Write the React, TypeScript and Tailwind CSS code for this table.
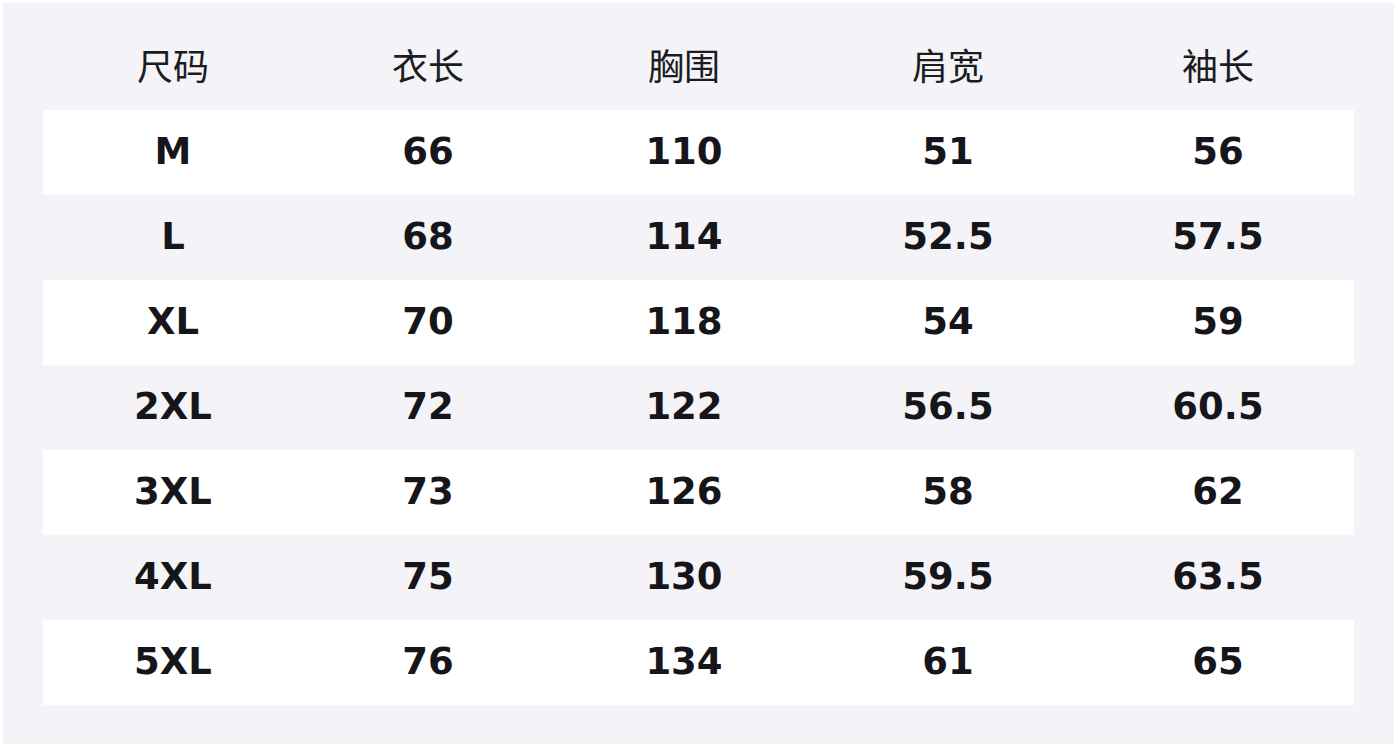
import React from "react";

const headers = ["尺码", "衣长", "胸围", "肩宽", "袖长"];

const rows = [
  ["M", "66", "110", "51", "56"],
  ["L", "68", "114", "52.5", "57.5"],
  ["XL", "70", "118", "54", "59"],
  ["2XL", "72", "122", "56.5", "60.5"],
  ["3XL", "73", "126", "58", "62"],
  ["4XL", "75", "130", "59.5", "63.5"],
  ["5XL", "76", "134", "61", "65"],
];

const cols = "grid grid-cols-[260px_250px_262px_266px_274px]";

export default function App() {
  return (
    <div className="w-[1398px] h-[748px] bg-white pt-[3px] pl-[3px]">
      <div className="w-[1391px] h-[741px] bg-[#f3f3f8] pt-[22px] px-10 pb-[39px]">
        <div
          className={`${cols} h-[85px] items-center pb-2 text-[36px] text-[#1c1c1e]`}
          style={{ fontFamily: '"Noto Sans CJK SC", sans-serif' }}
        >
          {headers.map((h) => (
            <div key={h} className="text-center leading-none">
              {h}
            </div>
          ))}
        </div>
        {rows.map((r, i) => (
          <div
            key={r[0]}
            className={`${cols} h-[85px] items-center pb-[2px] text-[37px] font-bold text-[#16161a] ${
              i % 2 === 0 ? "bg-white" : "bg-transparent"
            }`}
            style={{ fontFamily: '"DejaVu Sans", sans-serif' }}
          >
            {r.map((c, j) => (
              <div key={j} className="text-center leading-none">
                {c}
              </div>
            ))}
          </div>
        ))}
      </div>
    </div>
  );
}
